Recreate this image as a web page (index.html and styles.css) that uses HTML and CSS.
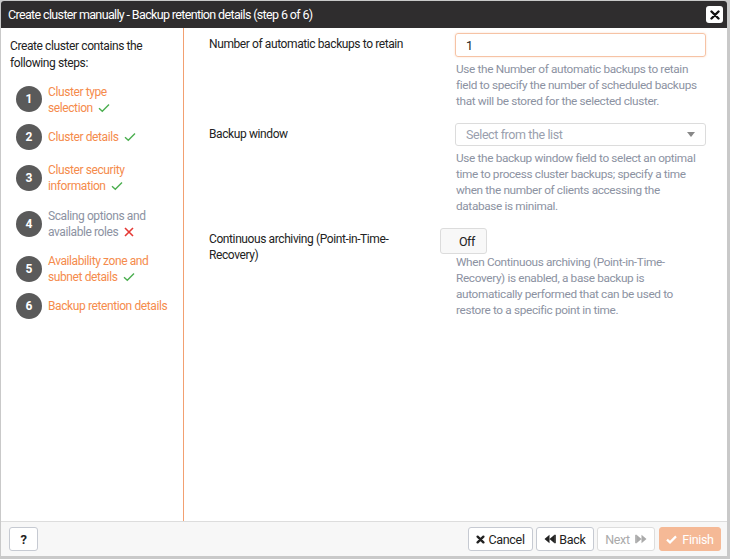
FILE: index.html
```html
<!DOCTYPE html>
<html>
<head>
<meta charset="utf-8">
<link rel="stylesheet" href="styles.css">
</head>
<body>
<div class="dialog">
  <div class="titlebar">
    <span class="title">Create cluster manually - Backup retention details (step 6 of 6)</span>
    <button class="close" aria-label="Close">
      <svg width="10" height="10" viewBox="0 0 10 10"><path d="M1.5 1.5 L8.5 8.5 M8.5 1.5 L1.5 8.5" stroke="#111" stroke-width="2.4" stroke-linecap="round"/></svg>
    </button>
  </div>
  <div class="main">
    <aside class="steps">
      <p class="intro">Create cluster contains the following steps:</p>
      <ul class="steplist">
        <li class="step done"><span class="num">1</span><span class="txt">Cluster type<br>selection <svg class="ok" width="12" height="10" viewBox="0 0 12 10"><path d="M1 5.2 L4.3 8.3 L11 1.5" fill="none" stroke="#4caf50" stroke-width="1.4"/></svg></span></li>
        <li class="step done"><span class="num">2</span><span class="txt">Cluster details <svg class="ok" width="12" height="10" viewBox="0 0 12 10"><path d="M1 5.2 L4.3 8.3 L11 1.5" fill="none" stroke="#4caf50" stroke-width="1.4"/></svg></span></li>
        <li class="step done"><span class="num">3</span><span class="txt">Cluster security<br>information <svg class="ok" width="12" height="10" viewBox="0 0 12 10"><path d="M1 5.2 L4.3 8.3 L11 1.5" fill="none" stroke="#4caf50" stroke-width="1.4"/></svg></span></li>
        <li class="step skip"><span class="num">4</span><span class="txt">Scaling options and<br>available roles <svg class="bad" width="10" height="10" viewBox="0 0 10 10"><path d="M1 1 L9 9 M9 1 L1 9" fill="none" stroke="#e53935" stroke-width="1.6"/></svg></span></li>
        <li class="step done"><span class="num">5</span><span class="txt">Availability zone and<br>subnet details <svg class="ok" width="12" height="10" viewBox="0 0 12 10"><path d="M1 5.2 L4.3 8.3 L11 1.5" fill="none" stroke="#4caf50" stroke-width="1.4"/></svg></span></li>
        <li class="step done"><span class="num">6</span><span class="txt">Backup retention details</span></li>
      </ul>
    </aside>
    <section class="form">
      <div class="row">
        <label class="label">Number of automatic backups to retain</label>
        <div class="field">
          <div class="input focused">1</div>
          <p class="help">Use the Number of automatic backups to retain field to specify the number of scheduled backups that will be stored for the selected cluster.</p>
        </div>
      </div>
      <div class="row">
        <label class="label">Backup window</label>
        <div class="field">
          <div class="input select"><span class="ph">Select from the list</span><span class="caret"></span></div>
          <p class="help">Use the backup window field to select an optimal time to process cluster backups; specify a time when the number of clients accessing the database is minimal.</p>
        </div>
      </div>
      <div class="row row3">
        <label class="label">Continuous archiving (Point-in-Time-Recovery)</label>
        <div class="field">
          <div class="toggle">Off</div>
          <p class="help">When Continuous archiving (Point-in-Time-Recovery) is enabled, a base backup is automatically performed that can be used to restore to a specific point in time.</p>
        </div>
      </div>
    </section>
  </div>
  <div class="footer">
    <button class="btn help-btn">?</button>
    <div class="actions">
      <button class="btn b-cancel"><svg width="9" height="9" viewBox="0 0 10 10"><path d="M1.8 1.8 L8.2 8.2 M8.2 1.8 L1.8 8.2" stroke="#222" stroke-width="2.6" stroke-linecap="round"/></svg>Cancel</button>
      <button class="btn b-back"><svg width="12" height="10" viewBox="0 0 12 10"><path d="M0.5 5 L5.5 0.8 V9.2 Z M5.5 5 L10.5 0.8 V9.2 Z" fill="#222"/><rect x="10.2" y="0.8" width="1.6" height="8.4" fill="#222"/></svg>Back</button>
      <button class="btn b-next disabled">Next<svg width="12" height="10" viewBox="0 0 12 10"><path d="M11.5 5 L6.5 0.8 V9.2 Z M6.5 5 L1.5 0.8 V9.2 Z" fill="#aaa"/><rect x="0.2" y="0.8" width="1.6" height="8.4" fill="#aaa"/></svg></button>
      <button class="btn finish"><svg width="11" height="9" viewBox="0 0 11 9"><path d="M1 4.6 L4 7.4 L10 1.4" fill="none" stroke="#fff" stroke-width="2.2"/></svg>Finish</button>
    </div>
  </div>
</div>
</body>
</html>
```
FILE: styles.css
```css
* { box-sizing: border-box; }
html, body { margin: 0; padding: 0; }
body {
  width: 730px; height: 559px;
  background: #c9c9c9;
  font-family: Roboto, "Liberation Sans", sans-serif;
  font-size: 12px;
  letter-spacing: -0.4px;
  color: #222;
  padding: 1px 3px 3px 1px;
}
.dialog {
  width: 726px; height: 555px;
  background: #fff;
  display: flex; flex-direction: column;
  border-radius: 3px 3px 0 0;
  overflow: hidden;
}
.titlebar {
  height: 27px;
  background: #2f2d2e;
  display: flex; align-items: center; justify-content: space-between;
  padding: 0 4px 0 7px;
}
.title {
  color: #fff;
  font-size: 12.5px;
  letter-spacing: -0.64px;
}
.close {
  width: 17px; height: 17px;
  background: #fff; border: none; border-radius: 3px;
  display: flex; align-items: center; justify-content: center;
  padding: 0;
}
.main { flex: 1; display: flex; min-height: 0; }
.steps {
  width: 183px;
  border-right: 1px solid #f2a071;
  padding: 10px 4px 0 9px;
}
.intro { margin: 0 0 12px 0; line-height: 17px; color: #222; }
.steplist { list-style: none; margin: 0; padding: 0; display: flex; flex-direction: column; }
.step { display: flex; align-items: center; gap: 6px; padding-left: 6px; }
.step:nth-child(2) { margin-top: 8px; }
.step:nth-child(3) { margin-top: 12px; }
.step:nth-child(4) { margin-top: 14px; }
.step:nth-child(5) { margin-top: 13px; }
.step:nth-child(6) { margin-top: 8px; }
.num {
  width: 26px; height: 26px; border-radius: 50%;
  background: #5a5a5a; color: #fff;
  font-weight: bold; font-size: 12px; letter-spacing: 0;
  display: flex; align-items: center; justify-content: center;
  flex: none;
}
.step:first-child .num { margin-top: -3px; }
.txt { line-height: 16px; color: #f58b4c; white-space: nowrap; }
.skip .txt { color: #8c92a2; }
.ok, .bad { margin-left: 3px; vertical-align: -1px; }
.form { flex: 1; padding: 5px 20px 0 25px; }
.row { display: flex; margin-bottom: 14px; }
.label { width: 246px; flex: none; padding-top: 3px; line-height: 16px; }
.row3 .label { width: 231px; padding-right: 31px; }
.field { width: 251px; }
.input {
  height: 24px;
  border: 1px solid #dcdcdc; border-radius: 3px;
  padding: 0 10px;
  display: flex; align-items: center; justify-content: space-between;
  font-size: 12.5px;
}
.input.focused { border-color: #f6c3a5; box-shadow: 0 0 2px rgba(245,139,76,0.35); }
.select { height: 23px; }
.ph { color: #9a9fae; }
.caret { width: 0; height: 0; border-left: 4px solid transparent; border-right: 4px solid transparent; border-top: 5px solid #888; }
.help { margin: 4px 0 0 1px; color: #8c92a2; line-height: 16px; font-size: 11.8px; letter-spacing: -0.35px; }
.row3 .field { width: 266px; }
.row3 .help { margin-left: 16px; margin-top: 0; }
.toggle {
  width: 47px; height: 26px;
  border: 1px solid #dcdcdc; border-radius: 3px;
  background: #f8f8f8;
  display: flex; align-items: center; justify-content: flex-end;
  padding-right: 11px;
  font-size: 12.5px;
}
.footer {
  height: 35px;
  border-top: 1px solid #ddd;
  background: #f7f7f7;
  display: flex; align-items: center; justify-content: space-between;
  padding: 0 6px 0 8px;
}
.actions { display: flex; gap: 3px; }
.btn {
  height: 24px;
  font-family: inherit; font-size: 12.5px; letter-spacing: -0.3px;
  border: 1px solid #c6cad2; border-radius: 3px;
  background: #fff; color: #222;
  display: flex; align-items: center; justify-content: center; gap: 3px;
  padding: 0;
}
.help-btn { width: 29px; font-weight: bold; font-size: 13px; }
.b-cancel { width: 65px; }
.b-back { width: 58px; }
.b-next { width: 58px; }
.btn.disabled { color: #aaa; border-color: #ddd; gap: 5px; }
.btn.finish { width: 62px; margin-left: 1px; background: #f5b996; border-color: #f5b996; color: #fff; gap: 5px; }
```
